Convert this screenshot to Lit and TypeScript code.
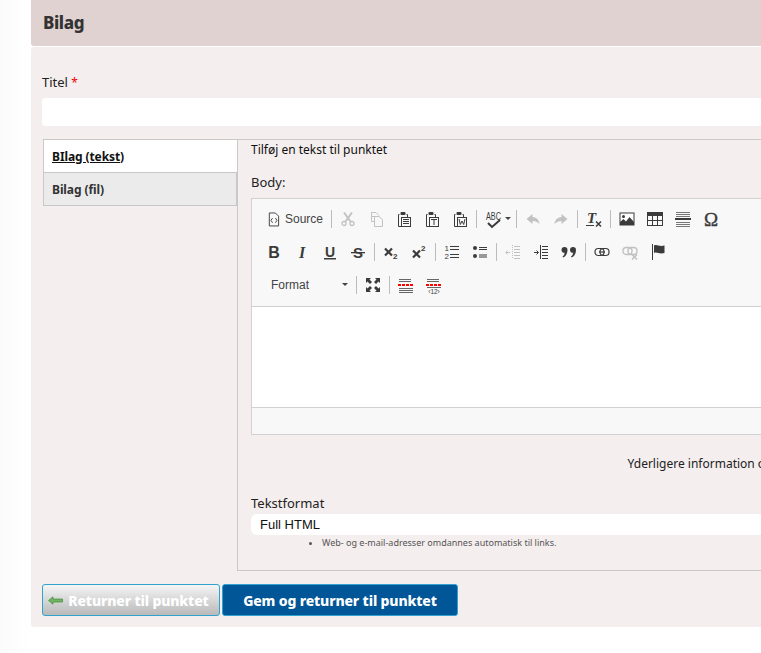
import { LitElement, html, css, svg } from "lit";
import { customElement } from "lit/decorators.js";

const ink = "#3b3b3b";
const serif = "Liberation Serif, serif";
const sans = "Liberation Sans, sans-serif";

const lines = (rows: number[][], w = 1, c = ink) =>
  rows.map(([x1, y, x2]) => svg`<line x1=${x1} y1=${y + 0.5} x2=${x2} y2=${y + 0.5} stroke=${c} stroke-width=${w}></line>`);

const clip = (inner: unknown) => svg`
  <path d="M3.5 3.5H2.5V15.5H6" fill="none" stroke=${ink}></path>
  <path d="M10.5 3.5H11.5V6" fill="none" stroke=${ink}></path>
  <rect x="4.5" y="1" width="5" height="3" rx="1" fill=${ink}></rect>
  <rect x="5.5" y="6.5" width="9" height="9" fill="none" stroke=${ink}></rect>
  ${inner}`;

const comma = (x: number) =>
  svg`<path transform="translate(${x} 2)" d="M0.5 4a3 3 0 1 1 6 0c0 4-2 6.5-4.5 7.5l-0.5-1c1.3-0.8 2-2 2.2-3.7a3 3 0 0 1-3.2-2.8z" fill=${ink}></path>`;

const icons: Record<string, unknown> = {
  source: svg`<path d="M3.5 1.5H10L13.5 5V15.5H3.5Z" fill="none" stroke=${ink}></path><path d="M7 7L5.2 9.5L7 12M10 7L11.8 9.5L10 12" fill="none" stroke=${ink}></path>`,
  cut: svg`<path d="M4 1.5L10.5 10.5M12 1.5L5.5 10.5" stroke=${ink} stroke-width="2" fill="none"></path><circle cx="4" cy="12.5" r="2" fill="none" stroke=${ink} stroke-width="1.3"></circle><circle cx="12" cy="12.5" r="2" fill="none" stroke=${ink} stroke-width="1.3"></circle>`,
  copy: svg`<path d="M8 5.5H3.5V1.5H8L11 4.5" fill="none" stroke=${ink}></path><path d="M3.5 1.5V10.5H6.5" fill="none" stroke=${ink}></path><path d="M6.5 5.5H11L14.5 8.5V15.5H6.5Z" fill="none" stroke=${ink}></path>`,
  paste: clip(lines([[7, 8, 13], [7, 10, 13], [7, 12, 13]])),
  pasteText: clip(svg`<path d="M7 8.5H13M10 8.5V14" stroke=${ink} fill="none"></path>`),
  pasteWord: clip(svg`<path d="M7 8L8.3 13.5L10 10L11.7 13.5L13 8" stroke=${ink} fill="none"></path>`),
  undo: svg`<path d="M7.5 3L1.5 8L7.5 13V10C10.5 10 12.5 11 14.5 13C14 9 11.5 6.3 7.5 6Z" fill=${ink}></path>`,
  redo: svg`<path d="M8.5 3L14.5 8L8.5 13V10C5.5 10 3.5 11 1.5 13C2 9 4.5 6.3 8.5 6Z" fill=${ink}></path>`,
  clear: svg`<text x="1" y="12" font-family=${serif} font-size="15" font-weight="700" font-style="italic" fill=${ink}>T</text><line x1="0" y1="14.5" x2="8" y2="14.5" stroke=${ink}></line><path d="M10 10.5L15 15.5M15 10.5L10 15.5" stroke=${ink} stroke-width="1.5"></path>`,
  image: svg`<rect x="1" y="2" width="14" height="12" fill="#fff" stroke=${ink}></rect><circle cx="4.5" cy="5.5" r="1.5" fill=${ink}></circle><path d="M1 14V11L4.5 8L7 10.5L10.5 6L15 11V14Z" fill=${ink}></path>`,
  table: svg`<rect x="0.5" y="1.5" width="15" height="13" fill="none" stroke=${ink}></rect><rect x="0" y="1" width="16" height="4" fill=${ink}></rect><path d="M5.5 5V14M10.5 5V14M0 9.5H16" stroke=${ink}></path>`,
  hr: svg`${lines([[1, 1, 15], [1, 3, 15], [1, 5, 15], [1, 11, 15], [1, 13, 15], [1, 15, 15]], 1, "#777")}<rect x="0" y="7" width="16" height="2" fill=${ink}></rect>`,
  omega: svg`<text x="8" y="14.5" text-anchor="middle" font-family=${serif} font-size="19" fill=${ink} stroke=${ink} stroke-width="0.35">Ω</text>`,
  bold: svg`<text x="8" y="14" text-anchor="middle" font-family=${sans} font-size="16" font-weight="700" fill=${ink}>B</text>`,
  italic: svg`<text x="8" y="14" text-anchor="middle" font-family=${serif} font-size="16" font-weight="700" font-style="italic" fill=${ink}>I</text>`,
  underline: svg`<text x="8" y="12.5" text-anchor="middle" font-family=${sans} font-size="14" font-weight="700" fill=${ink}>U</text><rect x="2" y="14" width="12" height="1.5" fill=${ink}></rect>`,
  strike: svg`<text x="8" y="14" text-anchor="middle" font-family=${sans} font-size="15" font-weight="700" fill=${ink}>S</text><rect x="1" y="8" width="14" height="1.3" fill=${ink}></rect>`,
  sub: svg`<path d="M2 4.5L9 11.5M9 4.5L2 11.5" stroke=${ink} stroke-width="2.2"></path><text x="10" y="15" font-family=${sans} font-size="8" font-weight="700" fill=${ink}>2</text>`,
  sup: svg`<path d="M2 6.5L9 13.5M9 6.5L2 13.5" stroke=${ink} stroke-width="2.2"></path><text x="10" y="7" font-family=${sans} font-size="8" font-weight="700" fill=${ink}>2</text>`,
  ol: svg`<text x="0.5" y="7" font-family=${sans} font-size="8" fill=${ink}>1</text><text x="0.5" y="15" font-family=${sans} font-size="8" fill=${ink}>2</text>${lines([[6, 2, 15], [6, 5, 15], [6, 10, 15], [6, 13, 15]])}`,
  ul: svg`<circle cx="3" cy="4" r="2" fill=${ink}></circle><circle cx="3" cy="12" r="2" fill=${ink}></circle><path d="M7 3.5H15M7 5.5H15M7 11H15M7 13H15" stroke=${ink}></path>`,
  outdent: svg`<path d="M7.5 1V15" stroke=${ink} stroke-dasharray="1 1"></path>${lines([[9, 2, 15], [9, 5, 15], [9, 8, 15], [9, 11, 15], [9, 14, 15]])}<path d="M1 8.5H5M2.5 6.5L0.8 8.5L2.5 10.5" stroke=${ink} fill="none"></path>`,
  indent: svg`<path d="M7.5 1V15" stroke=${ink}></path>${lines([[9, 2, 15], [9, 5, 15], [9, 8, 15], [9, 11, 15], [9, 14, 15]])}<path d="M1 8.5H5M3.5 6.5L5.5 8.5L3.5 10.5" stroke=${ink} fill="none"></path>`,
  quote: svg`${comma(0)}${comma(8.5)}`,
  link: svg`<rect x="1" y="4.5" width="9" height="7" rx="3.2" fill="none" stroke=${ink} stroke-width="1.2"></rect><rect x="6" y="4.5" width="9" height="7" rx="3.2" fill="none" stroke=${ink} stroke-width="1.2"></rect><line x1="5" y1="8" x2="11" y2="8" stroke=${ink} stroke-width="1.2"></line>`,
  unlink: svg`<rect x="1" y="3.5" width="9" height="7" rx="3.2" fill="none" stroke=${ink} stroke-width="1.4"></rect><rect x="6" y="3.5" width="9" height="7" rx="3.2" fill="none" stroke=${ink} stroke-width="1.4"></rect><path d="M10 10.5L15 15.5M15 10.5L10 15.5" stroke=${ink} stroke-width="1.6"></path>`,
  flag: svg`<line x1="2.5" y1="0" x2="2.5" y2="16" stroke=${ink}></line><path d="M4 1.5C7 0 9 3 14.5 1.5V9C9 10.5 7 7.5 4 9Z" fill=${ink}></path>`,
  maximize: svg`<path d="M1 1H6L4.5 2.5L7 5L5 7L2.5 4.5L1 6ZM15 1V6L13.5 4.5L11 7L9 5L11.5 2.5L10 1ZM1 15V10L2.5 11.5L5 9L7 11L4.5 13.5L6 15ZM15 15H10L11.5 13.5L9 11L11 9L13.5 11.5L15 10Z" fill=${ink}></path>`,
  breakAlign: svg`${lines([[1, 2, 13], [1, 4, 13]], 1, "#666")}<path d="M0 8H15" stroke="#f00" stroke-width="2" stroke-dasharray="3 1"></path>${lines([[1, 11, 15], [1, 13, 15], [1, 15, 15]], 1, "#666")}`,
  breakNum: svg`${lines([[1, 2, 13], [1, 4, 13]], 1, "#666")}<path d="M0 8H15" stroke="#f00" stroke-width="2" stroke-dasharray="3 1"></path>${lines([[1, 10, 15]], 1, "#666")}<text x="8" y="16.5" text-anchor="middle" font-family=${sans} font-size="6.5" fill=${ink}>‹12›</text>`,
};

// toolbar rows, "|" is a separator, "-x" means greyed out
const row2 = ["bold", "italic", "underline", "strike", "|", "sub", "sup", "|", "ol", "ul", "|", "-outdent", "indent", "quote", "|", "link", "-unlink", "flag"];
const row1b = ["-cut", "-copy", "paste", "pasteText", "pasteWord"];
const row1c = ["-undo", "-redo", "|", "clear", "|", "image", "table", "hr", "omega"];
const row3b = ["maximize", "|", "breakAlign", "breakNum"];

@customElement("app-root")
export class AppRoot extends LitElement {
  static styles = css`
    :host {
      display: block;
      width: 100%;
      height: 653px;
      overflow: hidden;
      background: linear-gradient(to right, #fbfbfb, #fff 30px);
      font-family: "Noto Sans", sans-serif;
      color: #222;
    }
    .page {
      width: 1204px;
      margin-left: 31px;
    }
    .head {
      height: 46px;
      box-sizing: border-box;
      background: #dfd2d0;
      border-radius: 0 0 0 3px;
      display: flex;
      align-items: center;
      padding: 0 0 2px 12px;
      margin-bottom: 1px;
      font-size: 17px;
      font-weight: 800;
      letter-spacing: -0.4px;
      color: #333;
    }
    .panel {
      background: #f4eeee;
      border-radius: 3px;
      height: 580px;
      padding: 25px 0 0 11px;
      box-sizing: border-box;
    }
    .label {
      font-size: 13px;
      line-height: 20px;
      color: #222;
    }
    .req {
      color: #e00;
      font-size: 12px;
      line-height: 0;
    }
    .title-input {
      height: 28px;
      margin-top: 6px;
      background: #fff;
      border-radius: 4px;
    }
    .tabs {
      display: flex;
      margin: 13px 0 0 1px;
    }
    .tab-list {
      width: 194px;
      flex: none;
      border: 1px solid #c8c8c8;
      border-right: none;
      align-self: flex-start;
      box-sizing: border-box;
      font-size: 12px;
      font-weight: 700;
      letter-spacing: -0.1px;
    }
    .tab {
      height: 32px;
      display: flex;
      align-items: center;
      padding-left: 8px;
      color: #333;
    }
    .tab.active {
      background: #fff;
      color: #111;
      text-decoration: underline;
    }
    .tab.off {
      background: #ebebeb;
      height: 33px;
      border-top: 1px solid #c8c8c8;
      border-right: 1px solid #c8c8c8;
      box-sizing: border-box;
    }
    .pane {
      flex: 1;
      height: 432px;
      box-sizing: border-box;
      border: 1px solid #c8c8c8;
      padding-left: 13px;
    }
    .hint {
      font-size: 12px;
      line-height: 20px;
      color: #111;
    }
    .body-label {
      margin-top: 12px;
      margin-bottom: 6px;
    }
    .editor {
      border: 1px solid #d1d1d1;
      background: #f8f8f8;
    }
    .toolbar {
      padding: 3px 8px 5px;
      border-bottom: 1px solid #d1d1d1;
    }
    .row {
      display: flex;
      align-items: center;
      height: 33px;
    }
    .btn {
      width: 28px;
      height: 28px;
      display: flex;
      align-items: center;
      justify-content: center;
      flex: none;
    }
    svg {
      overflow: visible;
    }
    .btn svg {
      width: 16px;
      height: 16px;
      display: block;
    }
    .off-icon {
      opacity: 0.28;
    }
    .sep {
      width: 1px;
      height: 18px;
      background: #bcbcbc;
      margin: 0 2px;
      flex: none;
    }
    .source {
      width: 69px;
      height: 28px;
      display: flex;
      align-items: center;
      padding-left: 7px;
      box-sizing: border-box;
      font-family: "Liberation Sans", sans-serif;
      font-size: 12px;
      color: #444;
      gap: 5px;
      flex: none;
    }
    .source svg {
      width: 13px;
      height: 16px;
    }
    .spell {
      width: 35px;
      height: 28px;
      display: flex;
      align-items: center;
      padding-left: 5px;
      box-sizing: border-box;
      flex: none;
    }
    .spell svg {
      width: 20px;
      height: 18px;
    }
    .caret {
      width: 0;
      height: 0;
      border: 3px solid transparent;
      border-top-color: #444;
      border-bottom: none;
      margin-left: 1px;
    }
    .format {
      width: 94px;
      height: 28px;
      display: flex;
      align-items: center;
      justify-content: space-between;
      padding: 0 6px 0 11px;
      box-sizing: border-box;
      font-family: "Liberation Sans", sans-serif;
      font-size: 12px;
      color: #444;
      flex: none;
    }
    .content {
      height: 100px;
      background: #fff;
      border-bottom: 1px solid #d1d1d1;
    }
    .foot {
      height: 26px;
    }
    .more {
      margin-top: 19px;
      text-align: center;
      font-size: 12px;
      line-height: 20px;
      color: #222;
    }
    .fmt-label {
      margin-top: 19px;
    }
    .fmt-select {
      height: 21px;
      margin-top: 1px;
      background: #fff;
      border-radius: 6px;
      padding-left: 9px;
      font-family: "Liberation Sans", sans-serif;
      font-size: 13px;
      line-height: 21px;
      color: #111;
    }
    .tips {
      margin: 1px 0 0;
      padding: 0 0 0 71px;
      font-size: 9px;
      line-height: 14px;
      color: #555;
    }
    .actions {
      display: flex;
      gap: 2px;
      margin-top: 13px;
    }
    .action {
      height: 32px;
      box-sizing: border-box;
      border: 1px solid #2fa3cd;
      border-radius: 3px;
      display: flex;
      align-items: center;
      justify-content: center;
      font-size: 14px;
      font-weight: 800;
      letter-spacing: -0.15px;
      color: #fff;
    }
    .back {
      width: 178px;
      gap: 5px;
      padding-right: 5px;
      background: linear-gradient(#f5f5f5, #b9b9b9);
    }
    .back svg {
      width: 15px;
      height: 9px;
    }
    .save {
      width: 236px;
      background: #005696;
    }
  `;

  icon(name: string) {
    if (name === "|") return html`<span class="sep"></span>`;
    const off = name.startsWith("-");
    const key = off ? name.slice(1) : name;
    return html`<span class="btn ${off ? "off-icon" : ""}"><svg viewBox="0 0 16 16">${icons[key]}</svg></span>`;
  }

  render() {
    return html`
      <div class="page">
        <div class="head">Bilag</div>
        <div class="panel">
          <div class="label">Titel <span class="req">*</span></div>
          <div class="title-input"></div>
          <div class="tabs">
            <div class="tab-list">
              <div class="tab active">BIlag (tekst)</div>
              <div class="tab off">Bilag (fil)</div>
            </div>
            <div class="pane">
              <div class="hint">Tilføj en tekst til punktet</div>
              <div class="label body-label">Body:</div>
              <div class="editor">
                <div class="toolbar">
                  <div class="row">
                    <span class="source"><svg viewBox="1 0 14 16">${icons.source}</svg>Source</span>
                    <span class="sep"></span>
                    ${row1b.map((n) => this.icon(n))}
                    <span class="sep"></span>
                    <span class="spell">
                      <svg viewBox="0 0 20 18">
                        <text x="2" y="10" font-family="Liberation Sans, sans-serif" font-size="11" textLength="15" lengthAdjust="spacingAndGlyphs" fill="#3b3b3b">ABC</text>
                        <path d="M4 13L8 17L16 10" fill="none" stroke="#3b3b3b" stroke-width="2"></path>
                      </svg>
                      <span class="caret"></span>
                    </span>
                    <span class="sep"></span>
                    ${row1c.map((n) => this.icon(n))}
                  </div>
                  <div class="row">${row2.map((n) => this.icon(n))}</div>
                  <div class="row">
                    <span class="format">Format<span class="caret"></span></span>
                    <span class="sep"></span>
                    ${row3b.map((n) => this.icon(n))}
                  </div>
                </div>
                <div class="content"></div>
                <div class="foot"></div>
              </div>
              <div class="more">Yderligere information om tekstformater</div>
              <div class="label fmt-label">Tekstformat</div>
              <div class="fmt-select">Full HTML</div>
              <ul class="tips"><li>Web- og e-mail-adresser omdannes automatisk til links.</li></ul>
            </div>
          </div>
          <div class="actions">
            <div class="action back">
              <svg viewBox="0 0 15 9"><path d="M0.5 4.5L5 0.8V3H14.5V6H5V8.2Z" fill="#6fb562" stroke="#3f8a3a" stroke-width="0.7"></path></svg>
              Returner til punktet
            </div>
            <div class="action save">Gem og returner til punktet</div>
          </div>
        </div>
      </div>
    `;
  }
}
